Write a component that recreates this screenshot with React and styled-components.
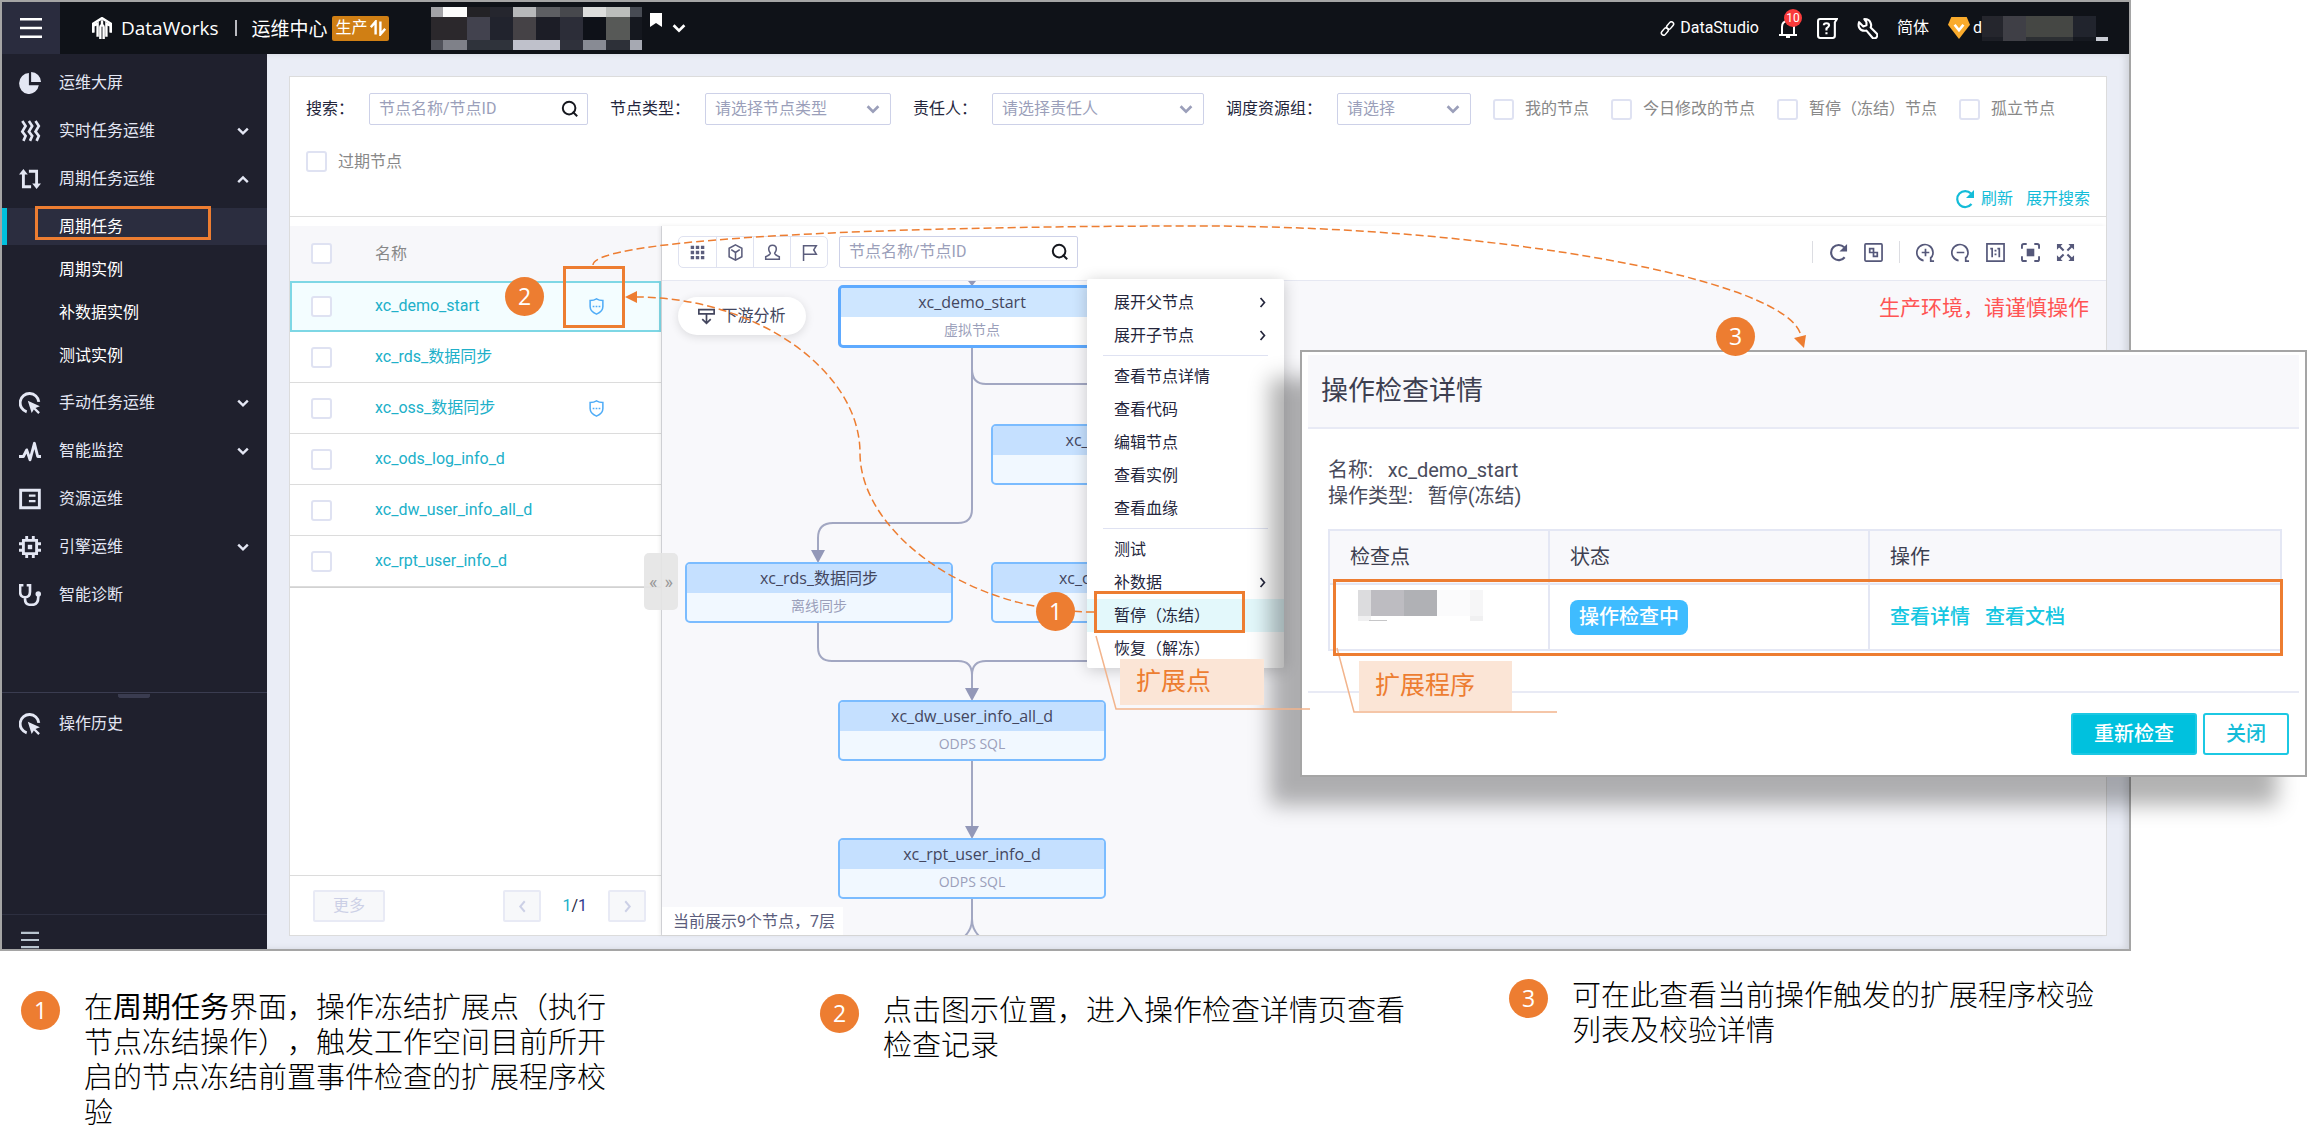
import React, { Component } from 'react'
import styled, { createGlobalStyle, css } from 'styled-components'

const cjk = '"Noto Sans CJK SC", sans-serif'
const orange = '#ed7d31'

const GlobalStyle = createGlobalStyle`
  *, *::before, *::after {
    box-sizing: border-box;
  }
  body {
    margin: 0;
    background: #fff;
    font-family: Roboto, ${cjk};
    font-size: 16px;
    line-height: 20px;
    color: #24263c;
    text-spacing-trim: space-all;
  }
  button, input, select {
    font: inherit;
    color: inherit;
  }
  svg {
    display: block;
    flex: none;
  }
  a {
    text-decoration: none;
  }
`

// icons, all drawn on a 20 x 20 grid

const icons = {
  pie: <g fill="currentColor"><path d="M9 1a9 9.500 0 1 0 9 11H9z" /><path d="M11 0a9 9 0 0 1 9 9h-9z" /></g>,
  waves: <path d="M3 1l3 4.500-3 5 3 4-2 4.500M9 1l3 4.500-3 5 3 4-2 4.500M15 1l3 4.500-3 5 3 4-2 4.500" fill="none" stroke="currentColor" strokeWidth="2.400" />,
  cycle: <g><path d="M4 5v12h7M9 3h7v12" fill="none" stroke="currentColor" strokeWidth="2.600" /><path d="M0 6l4-5 4 5zM12 14l4 5 4-5z" fill="currentColor" /></g>,
  manual: <g><path d="M7 18A8.500 8.500 0 1 1 18 9" fill="none" stroke="currentColor" strokeWidth="2.600" /><path d="M8 8l11 5-4 1.500 4 4-1.500 1.500-4-4-2 3z" fill="currentColor" /></g>,
  pulse: <path d="M0 15h4l3-6 3 9 4-15 3 12h3" fill="none" stroke="currentColor" strokeWidth="2.600" strokeLinejoin="round" />,
  resource: <g><path d="M1.500 2h17v16h-17z" fill="none" stroke="currentColor" strokeWidth="2.600" /><path d="M9 6h6v2H9zM9 11h6v2H9z" fill="currentColor" /></g>,
  chip: <g><path d="M4 4h12v12H4zM7 0v4M13 0v4M7 16v4M13 16v4M0 7h4M0 13h4M16 7h4M16 13h4" fill="none" stroke="currentColor" strokeWidth="2.600" /><path d="M8 8h4v4H8z" fill="currentColor" /></g>,
  doctor: <g><path d="M4 1H1v6q0 5 4.500 5T10 7V1H7M5.500 12v2q0 5 6 5t6-7V9" fill="none" stroke="currentColor" strokeWidth="2.400" /><circle cx="17.500" cy="9" r="2.500" fill="currentColor" /></g>,
  menu: <path d="M0 2h20M0 10h20M0 18h20" stroke="currentColor" strokeWidth="2.400" fill="none" />,
  down: <path d="M4 7l6 6 6-6" fill="none" stroke="currentColor" strokeWidth="3" />,
  up: <path d="M4 14l6-6 6 6" fill="none" stroke="currentColor" strokeWidth="3" />,
  right: <path d="M7 3l6 7-6 7" fill="none" stroke="currentColor" strokeWidth="2.600" />,
  left: <path d="M13 3l-6 7 6 7" fill="none" stroke="currentColor" strokeWidth="2.600" />,
  search: <g fill="none" stroke="currentColor" strokeWidth="2.200"><circle cx="9" cy="9" r="7" /><path d="M13 13l5 5" /></g>,
  logo: <g fill="none" stroke="currentColor" strokeWidth="2.200"><path d="M2 14V6l8-5 8 5v8" /><path d="M2 14V8l4-2v12M18 14V8l-4-2v12M10 3v4M8.500 20V9q0-1 1.500-2 1.500 1 1.500 2v11" /></g>,
  link: <g fill="none" stroke="currentColor" strokeWidth="2"><rect x="8" y="3" width="11" height="6" rx="3" transform="rotate(-50 13.500 6)" /><rect x="1" y="11" width="11" height="6" rx="3" transform="rotate(-50 6.500 14)" /></g>,
  bell: <g fill="none" stroke="currentColor" strokeWidth="2"><path d="M1 17h18M4 17V9q0-6 6-6t6 6v8" /><path d="M8 19h4" /></g>,
  help: <g fill="none" stroke="currentColor" strokeWidth="2"><path d="M19 1H3Q1 1 1 3v14q0 2 2 2h12q2 0 2-2V4z" /><path d="M6.500 7q0-2 2.500-2t2.500 2q0 1.500-2.500 3v2M9 13.500v2" /></g>,
  wrench: <path d="M7 1q5 0 6 4 1 2 0 4l6 6q1 2-.5 3.500T15 19l-6-7q-5 1-7-3-1-2 0-5l4 4 3-1V4z" fill="none" stroke="currentColor" strokeWidth="2" strokeLinejoin="round" />,
  gem: <g><path d="M3 0h14l3 7-10 13L0 7z" fill="#faab2c" /><path d="M6 7l4 5 4-5" fill="none" stroke="#fff" strokeWidth="2.400" /></g>,
  refresh: <g><path d="M16.500 15A8 8 0 1 1 16 4.500" fill="none" stroke="currentColor" strokeWidth="2.200" /><path d="M19 1v8h-8z" fill="currentColor" /></g>,
  shield: <g><path d="M10 1q3 2 7.500 2v7q0 6-7.500 9-7.500-3-7.500-9V3Q7 3 10 1z" fill="none" stroke="currentColor" strokeWidth="1.800" /><path d="M5.500 9h2v2h-2zM9 9h2v2H9zM12.500 9h2v2h-2z" fill="currentColor" /></g>,
  grid: <path d="M2 2h4v4H2zM8 2h4v4H8zM14 2h4v4h-4zM2 8h4v4H2zM8 8h4v4H8zM14 8h4v4h-4zM2 14h4v4H2zM8 14h4v4H8zM14 14h4v4h-4z" fill="currentColor" />,
  cube: <path d="M10 1l7.500 4v10L10 19l-7.500-4V5zM5 6.500l5 3.500 5-3.500M10 10v8" fill="none" stroke="currentColor" strokeWidth="1.800" />,
  person: <path d="M10 1.500q4.500 0 4.500 4.500 0 2.500-2 5 0 1.500 5.500 4v3H2v-3q5.500-2.500 5.500-4-2-2.500-2-5Q5.500 1.500 10 1.500z" fill="none" stroke="currentColor" strokeWidth="1.800" />,
  flag: <path d="M3 20V2h15l-3 5 3 5H3" fill="none" stroke="currentColor" strokeWidth="1.800" />,
  downstream: <path d="M1 2h18v5H1zM10 7v11M5 13l5 5 5-5" fill="none" stroke="currentColor" strokeWidth="2" />,
  relate: <g fill="none" stroke="currentColor" strokeWidth="1.800"><rect x="1" y="1" width="18" height="18" rx="1" /><path d="M6 6h4v4H6zM10 10h4v4h-4z" /></g>,
  zoomIn: <path d="M8 18.500A8.500 8.500 0 1 1 15 16.500M19 19h-3.500v-4.500M10 6v8M6 10h8" fill="none" stroke="currentColor" strokeWidth="1.800" />,
  zoomOut: <path d="M8 18.500A8.500 8.500 0 1 1 15 16.500M19 19h-3.500v-4.500M6 10h8" fill="none" stroke="currentColor" strokeWidth="1.800" />,
  actual: <g><path d="M1 1h18v18H1zM6.500 5v10M14 5v10M4.500 6h2M12 6h2" fill="none" stroke="currentColor" strokeWidth="1.800" /><path d="M9 7h2v2H9zM9 11h2v2H9z" fill="currentColor" /></g>,
  fit: <g><path d="M1 6V3q0-2 2-2h3M14 1h3q2 0 2 2v3M19 14v3q0 2-2 2h-3M6 19H3q-2 0-2-2v-3" fill="none" stroke="currentColor" strokeWidth="2" /><path d="M6 6h8v8H6z" fill="currentColor" /></g>,
  full: <g><path d="M3 3l5 5M17 3l-5 5M3 17l5-5M17 17l-5-5" stroke="currentColor" strokeWidth="2.200" /><path d="M1 1h6L1 7zM19 1v6l-6-6zM1 19v-6l6 6zM19 19h-6l6-6z" fill="currentColor" /></g>,
  updown: <path d="M1 9l6-7v16M19 11l-6 7V2" fill="none" stroke="currentColor" strokeWidth="3" />
}

const Icon = ({ name, size = 20 }) => (
  <svg width={size} height={size} viewBox="0 0 20 20" aria-hidden="true">{icons[name]}</svg>
)

const menuItems = [
  { icon: 'pie', label: '运维大屏' },
  { icon: 'waves', label: '实时任务运维', arrow: 'down' },
  { icon: 'cycle', label: '周期任务运维', arrow: 'up', children: ['周期任务', '周期实例', '补数据实例', '测试实例'] },
  { icon: 'manual', label: '手动任务运维', arrow: 'down' },
  { icon: 'pulse', label: '智能监控', arrow: 'down' },
  { icon: 'resource', label: '资源运维' },
  { icon: 'chip', label: '引擎运维', arrow: 'down' },
  { icon: 'doctor', label: '智能诊断' }
]

const tasks = [
  { name: 'xc_demo_start', checked: true },
  { name: 'xc_rds_数据同步' },
  { name: 'xc_oss_数据同步', checked: true },
  { name: 'xc_ods_log_info_d' },
  { name: 'xc_dw_user_info_all_d' },
  { name: 'xc_rpt_user_info_d' }
]

const nodes = [
  { name: 'xc_demo_start', type: '虚拟节点', x: 176, y: 4, current: true },
  { name: 'xc_oss_数据同步', type: '离线同步', x: 329, y: 143 },
  { name: 'xc_rds_数据同步', type: '离线同步', x: 23, y: 281 },
  { name: 'xc_ods_log_info_d', type: 'ODPS SQL', x: 329, y: 281 },
  { name: 'xc_dw_user_info_all_d', type: 'ODPS SQL', x: 176, y: 419 },
  { name: 'xc_rpt_user_info_d', type: 'ODPS SQL', x: 176, y: 557 }
]

const contextMenu = [
  [{ label: '展开父节点', more: true }, { label: '展开子节点', more: true }],
  [{ label: '查看节点详情' }, { label: '查看代码' }, { label: '编辑节点' }, { label: '查看实例' }, { label: '查看血缘' }],
  [{ label: '测试' }, { label: '补数据', more: true }, { label: '暂停（冻结）', active: true }, { label: '恢复（解冻）' }]
]

const Mosaic = ({ cells, width, height }) => (
  <svg width={width} height={height} viewBox={`0 0 ${width} ${height}`} aria-hidden="true">
    {cells.map(([x, y, w, h, fill], i) => <rect key={i} x={x} y={y} width={w} height={h} fill={fill} />)}
  </svg>
)

const workspaceCells = [
  [0, 0, 12, 10, '#a3a3a7'], [12, 0, 24, 10, '#fcfcfc'], [36, 0, 23, 10, '#232226'], [59, 0, 23, 10, '#25262e'],
  [82, 0, 23, 10, '#b7b8ba'], [105, 0, 24, 10, '#5e5f63'], [129, 0, 23, 10, '#47484d'], [152, 0, 23, 10, '#dcdddc'],
  [175, 0, 24, 10, '#bcbebc'], [199, 0, 12, 10, '#474b53'],
  [0, 10, 36, 23, '#2b282c'], [36, 10, 23, 23, '#42424e'], [59, 10, 23, 23, '#21232d'], [82, 10, 23, 23, '#454246'],
  [105, 10, 24, 23, '#1c1d26'], [129, 10, 23, 23, '#2c2d38'], [152, 10, 23, 23, '#0e1118'], [175, 10, 24, 23, '#575957'],
  [199, 10, 12, 23, '#15181f'],
  [0, 33, 12, 10, '#50525a'], [12, 33, 24, 10, '#7f8189'], [36, 33, 46, 10, '#2f333b'], [82, 33, 47, 10, '#bfc1cb'],
  [129, 33, 23, 10, '#2f313b'], [152, 33, 23, 10, '#888b94'], [175, 33, 24, 10, '#2d3038'], [199, 33, 12, 10, '#a6a9b2']
]

const userCells = [
  [0, 0, 21, 21, '#25262d'], [21, 0, 23, 25, '#3f3f46'], [44, 0, 47, 21, '#454744'], [91, 0, 23, 21, '#21242d'],
  [0, 21, 21, 4, '#1d1f26'], [44, 21, 47, 4, '#2c2f33'], [91, 21, 23, 4, '#161920'], [114, 21, 12, 4, '#c9ccd4']
]

const checkCells = [
  [0, 0, 13, 26, '#dcdcde'], [13, 0, 33, 26, '#bdbcc1'], [46, 0, 33, 26, '#b0b1b5'], [79, 0, 33, 26, '#fbfbfc'],
  [112, 0, 13, 26, '#f6f6f7'], [0, 26, 13, 5, '#f0f0f1'], [11, 30, 18, 1, '#c6c6c8'], [112, 26, 13, 5, '#f0f0f1']
]

class Sidebar extends Component {

  renderItem = (item) => (
    <React.Fragment key={item.label}>
      <MenuLink href="#">
        <Icon name={item.icon} size={22} />
        <MenuText>{item.label}</MenuText>
        {item.arrow && <Icon name={item.arrow} size={16} />}
      </MenuLink>
      {item.children &&
        <SubMenu>
          {item.children.map((label, i) => <SubLink href="#" key={label} $active={i === 0}>{label}</SubLink>)}
        </SubMenu>
      }
    </React.Fragment>
  )

  render() {
    return (
      <SidebarWrapper>
        <MenuList>{menuItems.map(this.renderItem)}</MenuList>
        <History>
          <MenuLink href="#">
            <Icon name="manual" size={22} />
            <MenuText>操作历史</MenuText>
          </MenuLink>
        </History>
        <Collapse aria-label="收起菜单"><Icon name="menu" size={18} /></Collapse>
      </SidebarWrapper>
    )
  }
}

const Header = () => (
  <HeaderBar>
    <MenuButton aria-label="菜单"><Icon name="menu" size={22} /></MenuButton>
    <Logo href="#"><Icon name="logo" size={22} />DataWorks</Logo>
    <HeaderDivider />
    <Center>运维中心</Center>
    <EnvBadge>生产<Icon name="updown" size={16} /></EnvBadge>
    <Workspace>
      <Mosaic cells={workspaceCells} width={211} height={43} />
      <svg width="12" height="14" viewBox="0 0 12 14"><path d="M0 0h12v14l-6-4-6 4z" fill="#fff" /></svg>
      <Icon name="down" size={18} />
    </Workspace>
    <HeaderRight>
      <HeaderLink href="#"><Icon name="link" size={15} />DataStudio</HeaderLink>
      <BellButton aria-label="消息"><Icon name="bell" size={20} /><BellCount>10</BellCount></BellButton>
      <IconButton aria-label="帮助"><Icon name="help" size={21} /></IconButton>
      <IconButton aria-label="设置"><Icon name="wrench" size={21} /></IconButton>
      <HeaderLink href="#">简体</HeaderLink>
      <User><Icon name="gem" size={22} />d<Mosaic cells={userCells} width={126} height={25} /></User>
    </HeaderRight>
  </HeaderBar>
)

const SelectField = ({ label, placeholder, width }) => (
  <Field>
    {label}
    <SelectBox $width={width}>
      <select><option>{placeholder}</option></select>
      <Icon name="down" size={18} />
    </SelectBox>
  </Field>
)

const CheckField = ({ label }) => (
  <CheckLabel><CheckBox type="checkbox" />{label}</CheckLabel>
)

const Filters = () => (
  <FilterArea>
    <FilterRow>
      <Field>
        搜索：
        <SearchBox $width={219}>
          <input placeholder="节点名称/节点ID" />
          <Icon name="search" size={18} />
        </SearchBox>
      </Field>
      <SelectField label="节点类型：" placeholder="请选择节点类型" width={186} />
      <SelectField label="责任人：" placeholder="请选择责任人" width={212} />
      <SelectField label="调度资源组：" placeholder="请选择" width={134} />
      {['我的节点', '今日修改的节点', '暂停（冻结）节点', '孤立节点', '过期节点'].map(label => <CheckField key={label} label={label} />)}
    </FilterRow>
    <FilterLinks>
      <a href="#"><Icon name="refresh" size={20} />刷新</a>
      <a href="#">展开搜索</a>
    </FilterLinks>
  </FilterArea>
)

const TaskList = () => (
  <ListPane>
    <TaskTable>
      <thead>
        <tr>
          <th><CheckBox type="checkbox" aria-label="全选" /></th>
          <th>名称</th>
          <th />
        </tr>
      </thead>
      <tbody>
        {tasks.map((task, i) => (
          <TaskRow key={task.name} $selected={i === 0}>
            <td><CheckBox type="checkbox" aria-label={task.name} /></td>
            <td><a href="#">{task.name}</a></td>
            <td>{task.checked && <Icon name="shield" size={17} />}</td>
          </TaskRow>
        ))}
      </tbody>
    </TaskTable>
    <ListFooter>
      <PageButton $width={72} disabled>更多</PageButton>
      <Pager>
        <PageButton $width={38} disabled aria-label="上一页"><Icon name="left" size={15} /></PageButton>
        <span><b>1</b>/<i>1</i></span>
        <PageButton $width={38} disabled aria-label="下一页"><Icon name="right" size={15} /></PageButton>
      </Pager>
    </ListFooter>
    <Splitter aria-label="调整宽度"><span>«</span><span>»</span></Splitter>
  </ListPane>
)

const Edges = () => (
  <EdgeLayer aria-hidden="true">
    <g fill="none" stroke="#a2a7c2" strokeWidth="2">
      <path d="M310 66V228Q310 242 296 242H171Q156 242 156 257V272" />
      <path d="M310 88Q310 103 324 103H449Q463 103 463 117V134" />
      <path d="M156 341V366Q156 380 170 380H296Q310 380 310 394V410" />
      <path d="M463 341V366Q463 380 449 380H324Q310 380 310 394" />
      <path d="M310 480V548" />
      <path d="M310 618V638Q310 648 303 655M310 638Q310 648 317 655" />
    </g>
    <g fill="#9398b8">
      <path d="M306 0h8l-4 5z" />
      <path d="M149 269h14l-7 13z" />
      <path d="M303 407h14l-7 13z" />
      <path d="M303 545h14l-7 13z" />
    </g>
  </EdgeLayer>
)

class Graph extends Component {

  renderMenuItem = (item) => (
    <ContextItem key={item.label} $active={item.active}>
      {item.label}
      {item.more && <Icon name="right" size={13} />}
    </ContextItem>
  )

  render() {
    return (
      <GraphPane>
        <Toolbar>
          <ButtonGroup>
            {['grid', 'cube', 'person', 'flag'].map(name => <button key={name} aria-label={name}><Icon name={name} size={17} /></button>)}
          </ButtonGroup>
          <SearchBox $width={239}>
            <input placeholder="节点名称/节点ID" aria-label="节点名称/节点ID" />
            <Icon name="search" size={18} />
          </SearchBox>
          <Tools>
            <ToolDivider />
            <IconButton aria-label="刷新"><Icon name="refresh" size={19} /></IconButton>
            <IconButton aria-label="关联"><Icon name="relate" size={19} /></IconButton>
            <ToolDivider />
            <IconButton aria-label="放大"><Icon name="zoomIn" size={19} /></IconButton>
            <IconButton aria-label="缩小"><Icon name="zoomOut" size={19} /></IconButton>
            <IconButton aria-label="实际大小"><Icon name="actual" size={19} /></IconButton>
            <IconButton aria-label="适应画布"><Icon name="fit" size={19} /></IconButton>
            <IconButton aria-label="全屏"><Icon name="full" size={19} /></IconButton>
          </Tools>
        </Toolbar>
        <Canvas>
          <Edges />
          {nodes.map(node => (
            <Node key={node.name} $x={node.x} $y={node.y} $current={node.current}>
              <NodeName $current={node.current}>{node.name}</NodeName>
              <NodeType>{node.type}</NodeType>
            </Node>
          ))}
          <Downstream><Icon name="downstream" size={17} />下游分析</Downstream>
          <Warning>生产环境，请谨慎操作</Warning>
          <NodeCount>当前展示9个节点，7层</NodeCount>
        </Canvas>
        <ContextMenu>
          {contextMenu.map((group, i) => <ContextGroup key={i}>{group.map(this.renderMenuItem)}</ContextGroup>)}
        </ContextMenu>
      </GraphPane>
    )
  }
}

const CheckDialog = () => (
  <Dialog role="dialog" aria-labelledby="check-title">
    <DialogTitle id="check-title">操作检查详情</DialogTitle>
    <DialogBody>
      <div>名称:&nbsp;&nbsp; xc_demo_start</div>
      <div>操作类型:&nbsp;&nbsp; 暂停(冻结)</div>
      <CheckTable>
        <thead>
          <tr><th>检查点</th><th>状态</th><th>操作</th></tr>
        </thead>
        <tbody>
          <tr>
            <td><Mosaic cells={checkCells} width={125} height={54} /></td>
            <td><StatusTag>操作检查中</StatusTag></td>
            <td><a href="#">查看详情</a><a href="#">查看文档</a></td>
          </tr>
        </tbody>
      </CheckTable>
    </DialogBody>
    <DialogFooter>
      <DialogButton $primary>重新检查</DialogButton>
      <DialogButton>关闭</DialogButton>
    </DialogFooter>
  </Dialog>
)

const Annotations = () => (
  <AnnotationLayer>
    <svg width="100%" height="100%" fill="none" stroke={orange} strokeWidth="1.500">
      <g strokeDasharray="8 4">
        <path d="M593 265C593 240 865 226 1199 226C1500 226 1790 280 1801 336" />
        <path d="M1094 612C965 612 860 530 860 453C860 370 755 297 636 297" />
      </g>
      <path d="M625 297l12-6v12zM1804 348l-10-10 12-3z" fill={orange} stroke="none" />
      <g stroke="#f2b48c">
        <path d="M1096 636l20 73h194" />
        <path d="M1337 648l17 64h203" />
      </g>
    </svg>
    <Highlight $x={35} $y={206} $w={176} $h={34} />
    <Highlight $x={563} $y={266} $w={62} $h={62} />
    <Highlight $x={1094} $y={591} $w={151} $h={42} />
    <Highlight $x={1333} $y={579} $w={950} $h={77} />
    <Pin $x={1036} $y={592}>1</Pin>
    <Pin $x={505} $y={277}>2</Pin>
    <Pin $x={1716} $y={317}>3</Pin>
    <Tip $x={1120} $y={659} $w={144} $h={46}>扩展点</Tip>
    <Tip $x={1359} $y={661} $w={153} $h={50}>扩展程序</Tip>
  </AnnotationLayer>
)

export default class App extends Component {
  render() {
    return (
      <Page>
        <GlobalStyle />
        <Window>
          <Header />
          <Content>
            <Sidebar />
            <Main>
              <Panel>
                <Filters />
                <Work>
                  <TaskList />
                  <Graph />
                </Work>
              </Panel>
            </Main>
          </Content>
        </Window>
        <CheckDialog />
        <Annotations />
        <Captions>
          <Caption $top={34}>
            <Step>1</Step>
            <p>在<b>周期任务</b>界面，操作冻结扩展点（执行节点冻结操作），触发工作空间目前所开启的节点冻结前置事件检查的扩展程序校验</p>
          </Caption>
          <Caption $top={37}>
            <Step>2</Step>
            <p>点击图示位置，进入操作检查详情页查看检查记录</p>
          </Caption>
          <Caption $top={22}>
            <Step>3</Step>
            <p>可在此查看当前操作触发的扩展程序校验列表及校验详情</p>
          </Caption>
        </Captions>
      </Page>
    )
  }
}

const Page = styled.div`
  position: relative;
`

const Window = styled.div`
  margin-right: 178px;
  border: 2px solid #a5a5a5;
`

const HeaderBar = styled.header`
  display: flex;
  align-items: center;
  height: 52px;
  padding-right: 21px;
  overflow: hidden;
  background: #0f1218;
  color: #fff;
`

const bareButton = css`
  display: flex;
  align-items: center;
  justify-content: center;
  padding: 0;
  border: 0;
  background: none;
`

const MenuButton = styled.button`
  ${bareButton}
  width: 58px;
  height: 52px;
  background: #2a2c3e;
`

const Logo = styled.a`
  display: flex;
  align-items: center;
  gap: 8px;
  margin-left: 31px;
  color: #fff;
  font-family: "Open Sans", sans-serif;
  font-size: 19px;
`

const HeaderDivider = styled.span`
  width: 2px;
  height: 16px;
  margin: 0 14px 0 17px;
  background: #b9bac0;
`

const Center = styled.span`
  font-family: ${cjk};
  font-size: 19px;
`

const EnvBadge = styled.span`
  display: flex;
  align-items: center;
  gap: 3px;
  height: 25px;
  margin-left: 5px;
  padding: 0 3px;
  border-radius: 2px;
  background: #d07f14;
`

const Workspace = styled.div`
  display: flex;
  align-items: center;
  margin-left: 42px;
  gap: 8px;
  svg:nth-child(2) {
    margin-bottom: 16px;
  }
`

const HeaderRight = styled.div`
  display: flex;
  align-items: center;
  gap: 19px;
  margin-left: auto;
`

const HeaderLink = styled.a`
  display: flex;
  align-items: center;
  gap: 5px;
  color: #fff;
`

const IconButton = styled.button`
  ${bareButton}
`

const BellButton = styled(IconButton)`
  position: relative;
`

const BellCount = styled.span`
  position: absolute;
  top: -9px;
  left: 6px;
  width: 18px;
  height: 18px;
  border-radius: 9px;
  background: #f93b3b;
  font-size: 12px;
  line-height: 18px;
`

const User = styled.span`
  display: flex;
  align-items: center;
  svg:first-child {
    margin-right: 3px;
  }
`

const Content = styled.div`
  display: flex;
`

const SidebarWrapper = styled.nav`
  display: flex;
  flex-direction: column;
  flex: none;
  width: 265px;
  background: #1f202d;
  color: #e4e7f4;
`

const MenuList = styled.div`
  flex: 1;
  padding-top: 5px;
`

const MenuLink = styled.a`
  display: flex;
  align-items: center;
  height: 48px;
  padding: 0 16px 0 17px;
  gap: 18px;
  color: inherit;
`

const MenuText = styled.span`
  flex: 1;
`

const SubMenu = styled.div`
  display: flex;
  flex-direction: column;
  gap: 6px;
  padding: 5px 0;
`

const SubLink = styled.a`
  display: flex;
  align-items: center;
  height: 37px;
  padding-left: ${props => props.$active ? '52px' : '57px'};
  border-left: ${props => props.$active ? '5px solid #00c1de' : '0'};
  background: ${props => props.$active ? '#2b2d3f' : 'transparent'};
  color: #fff;
`

const History = styled.div`
  position: relative;
  height: 222px;
  padding-top: 7px;
  border-top: 1px solid #3a3c50;
  ::before {
    content: '';
    position: absolute;
    top: 1px;
    left: 116px;
    width: 32px;
    height: 4px;
    border-radius: 0 0 3px 3px;
    background: #3a3c50;
  }
`

const Collapse = styled.button`
  ${bareButton}
  justify-content: flex-start;
  align-items: flex-start;
  height: 35px;
  padding: 16px 19px 0;
  border-top: 1px solid #2d2f40;
  color: #b8c4cf;
`

const Main = styled.main`
  flex: 1;
  min-width: 0;
  padding: 22px 22px 13px;
  background: #eaedf6;
  box-shadow: inset -4px 0 6px rgba(0, 0, 0, 0.1);
`

const Panel = styled.div`
  border: 1px solid #dcdcdc;
  background: #fff;
`

const FilterArea = styled.form`
  padding: 16px 16px 7px;
  border-bottom: 1px solid #dcdcdc;
`

const FilterRow = styled.div`
  display: flex;
  flex-wrap: wrap;
  align-items: center;
  gap: 26px 22px;
`

const Field = styled.label`
  display: flex;
  align-items: center;
  gap: 15px;
  white-space: nowrap;
`

const inputBox = css`
  display: flex;
  align-items: center;
  width: ${props => props.$width}px;
  height: 32px;
  border: 1px solid #cdd1e8;
  border-radius: 2px;
  background: #fff;
`

const SearchBox = styled.span`
  ${inputBox}
  padding: 0 8px 0 9px;
  color: #16181f;
  input {
    flex: 1;
    min-width: 0;
    padding: 0;
    border: 0;
    outline: 0;
  }
  input::placeholder {
    color: #9b9fba;
  }
`

const SelectBox = styled.span`
  ${inputBox}
  position: relative;
  color: #9b9fba;
  select {
    width: 100%;
    height: 30px;
    padding: 0 9px;
    border: 0;
    background: none;
    appearance: none;
  }
  svg {
    position: absolute;
    right: 8px;
    pointer-events: none;
  }
`

const CheckLabel = styled.label`
  display: flex;
  align-items: center;
  gap: 11px;
  color: #888;
`

const CheckBox = styled.input`
  flex: none;
  appearance: none;
  width: 21px;
  height: 21px;
  margin: 0;
  border: 2px solid #dfe2f2;
  border-radius: 3px;
  background: #fff;
`

const FilterLinks = styled.div`
  display: flex;
  justify-content: flex-end;
  gap: 13px;
  margin-top: 17px;
  a {
    display: flex;
    align-items: center;
    gap: 6px;
    color: #14bcd8;
  }
`

const Work = styled.div`
  display: grid;
  grid-template-columns: 372px 1fr;
  padding-top: 9px;
`

const ListPane = styled.section`
  position: relative;
  display: flex;
  flex-direction: column;
  justify-content: space-between;
  border-right: 1px solid #dcdde2;
`

const TaskTable = styled.table`
  width: 100%;
  table-layout: fixed;
  border-spacing: 0;
  border-bottom: 1px solid #d2d2d2;
  th {
    height: 55px;
    padding: 0;
    background: #f7f7fa;
    color: #888;
    font-weight: 400;
    text-align: left;
  }
  th:first-child {
    width: 85px;
  }
  th:last-child {
    width: 129px;
  }
  td {
    height: 51px;
    padding: 0;
  }
  th:first-child, td:first-child {
    padding-left: 21px;
  }
  ${CheckBox} {
    display: block;
  }
`

const TaskRow = styled.tr`
  background: ${props => props.$selected ? '#f3fdff' : '#fff'};
  outline: ${props => props.$selected ? '2px solid #7ed7e5' : 'none'};
  outline-offset: -2px;
  td {
    border-bottom: 1px solid #dcdcdc;
  }
  a {
    color: #20b0c9;
  }
  svg {
    margin: 0 auto;
    color: #4facf7;
  }
`

const ListFooter = styled.div`
  display: flex;
  justify-content: space-between;
  padding: 14px 15px 13px 23px;
  border-top: 1px solid #dcdcdc;
`

const Pager = styled.div`
  display: flex;
  align-items: center;
  gap: 21px;
  b {
    color: #20b0c9;
    font-weight: 400;
  }
  i {
    color: #2e3a8c;
    font-style: normal;
  }
`

const PageButton = styled.button`
  ${bareButton}
  width: ${props => props.$width}px;
  height: 32px;
  border: 2px solid #e8eaf5;
  border-radius: 2px;
  background: #f7f8fa;
  color: #ccd0e6;
`

const Splitter = styled.button`
  ${bareButton}
  position: absolute;
  z-index: 2;
  top: 327px;
  right: -17px;
  width: 34px;
  height: 57px;
  gap: 7px;
  border-radius: 5px;
  background: rgba(228, 228, 228, 0.9);
  color: #999;
  font-size: 18px;
`

const GraphPane = styled.section`
  position: relative;
  display: flex;
  flex-direction: column;
  min-width: 0;
  box-shadow: -2px 0 4px rgba(0, 0, 0, 0.08);
`

const Toolbar = styled.div`
  display: flex;
  align-items: center;
  gap: 11px;
  height: 55px;
  padding: 0 31px 2px 16px;
  border-bottom: 1px solid #e6e8f2;
`

const ButtonGroup = styled.div`
  display: flex;
  height: 32px;
  border: 1px solid #dfe2f0;
  border-radius: 5px;
  color: #5b5d7c;
  button {
    ${bareButton}
    width: 37px;
  }
  button + button {
    border-left: 1px solid #dfe2f0;
  }
`

const Tools = styled.div`
  display: flex;
  align-items: center;
  gap: 16px;
  margin-left: auto;
  color: #55587a;
`

const ToolDivider = styled.span`
  width: 1px;
  height: 22px;
  background: #dcdde2;
`

const Canvas = styled.div`
  position: relative;
  flex: 1;
  min-height: 654px;
  overflow: hidden;
  background: #f8f8fb;
`

const EdgeLayer = styled.svg`
  position: absolute;
  width: 100%;
  height: 100%;
`

const Node = styled.div`
  position: absolute;
  left: ${props => props.$x}px;
  top: ${props => props.$y}px;
  width: 268px;
  height: ${props => props.$current ? 63 : 61}px;
  overflow: hidden;
  border: ${props => props.$current ? '3px solid #5eaaff' : '2px solid #7bbcff'};
  border-radius: 5px;
  background: ${props => props.$current ? '#fff' : '#f1f8ff'};
  text-align: center;
`

const NodeName = styled.div`
  height: 29px;
  background: ${props => props.$current ? '#cee6ff' : '#c5e0ff'};
  color: #43465e;
  font-family: "Open Sans", ${cjk};
  line-height: 28px;
`

const NodeType = styled.div`
  color: #9b9fba;
  font-family: "Open Sans", ${cjk};
  font-size: 14px;
  line-height: 26px;
`

const Downstream = styled.button`
  ${bareButton}
  position: absolute;
  top: 16px;
  left: 16px;
  width: 128px;
  height: 38px;
  gap: 6px;
  border-radius: 19px;
  background: #fff;
  box-shadow: 0 2px 10px rgba(0, 0, 0, 0.12);
  color: #43465e;
`

const Warning = styled.div`
  position: absolute;
  top: 13px;
  right: 17px;
  color: #ff5454;
  font-size: 21px;
  line-height: 28px;
`

const NodeCount = styled.div`
  position: absolute;
  bottom: 0;
  left: 0;
  padding: 5px 8px 3px 11px;
  background: #fff;
  color: #5b5d7c;
`

const ContextMenu = styled.div`
  position: absolute;
  z-index: 3;
  top: 53px;
  left: 425px;
  width: 197px;
  padding: 7px 0 3px;
  border-radius: 2px;
  background: #fff;
  box-shadow: 0 2px 16px rgba(0, 0, 0, 0.2);
`

const ContextGroup = styled.div`
  & + &::before {
    content: '';
    display: block;
    height: 1px;
    margin: 3px 16px 4px;
    background: #dfe2f2;
  }
`

const ContextItem = styled.button`
  ${bareButton}
  justify-content: space-between;
  width: 100%;
  height: 33px;
  padding: 0 15px 0 27px;
  background: ${props => props.$active ? '#e3f8fb' : 'none'};
`

const Dialog = styled.div`
  position: absolute;
  z-index: 4;
  top: 350px;
  right: 2px;
  width: 1007px;
  padding: 3px 6px 20px;
  border: 2px solid #a5a5a5;
  background: #fff;
  box-shadow: -30px 28px 20px rgba(0, 0, 0, 0.3);
  font-size: 20px;
`

const DialogTitle = styled.h2`
  margin: 0;
  padding-left: 13px;
  border-bottom: 2px solid #e8eaf5;
  background: #f8f8fb;
  color: #3d3f50;
  font-size: 27px;
  font-weight: 400;
  line-height: 72px;
`

const DialogBody = styled.div`
  padding: 28px 17px 40px 20px;
  border-bottom: 2px solid #e8eaf5;
  color: #4a4c5c;
  line-height: 26px;
`

const CheckTable = styled.table`
  width: 100%;
  margin-top: 20px;
  table-layout: fixed;
  border-collapse: collapse;
  th, td {
    padding: 0 20px;
    border: 2px solid #e4e7f4;
    font-weight: 400;
    text-align: left;
  }
  th {
    height: 54px;
    background: #f8f8fb;
    color: #3d3f50;
  }
  th:first-child {
    width: 220px;
  }
  th:nth-child(2) {
    width: 320px;
  }
  td {
    height: 66px;
  }
  td:first-child {
    padding-left: 28px;
  }
  a {
    margin-right: 15px;
    color: #14c6e1;
    font-weight: 500;
  }
`

const StatusTag = styled.span`
  display: inline-block;
  padding: 4px 9px 5px;
  border-radius: 8px;
  background: #3fbcff;
  color: #fff;
  font-weight: 500;
`

const DialogFooter = styled.div`
  display: flex;
  justify-content: flex-end;
  gap: 6px;
  padding: 20px 10px 0;
`

const DialogButton = styled.button`
  height: 42px;
  padding: 0 21px;
  border: 2px solid #1cc8e3;
  border-radius: 3px;
  background: ${props => props.$primary ? '#00c1de' : '#fff'};
  color: ${props => props.$primary ? '#fff' : '#14bcd8'};
  font-weight: 500;
`

const AnnotationLayer = styled.div`
  position: absolute;
  z-index: 5;
  inset: 0;
  pointer-events: none;
`

const Highlight = styled.div`
  position: absolute;
  left: ${props => props.$x}px;
  top: ${props => props.$y}px;
  width: ${props => props.$w}px;
  height: ${props => props.$h}px;
  border: 3px solid ${orange};
`

const Step = styled.span`
  flex: none;
  width: 39px;
  height: 39px;
  border-radius: 50%;
  background: ${orange};
  color: #fff;
  font-family: "Open Sans", sans-serif;
  font-size: 23px;
  line-height: 38px;
  text-align: center;
`

const Pin = styled(Step)`
  position: absolute;
  left: ${props => props.$x}px;
  top: ${props => props.$y}px;
`

const Tip = styled(Highlight)`
  padding-left: 16px;
  border: 0;
  background: #fbe5d6;
  color: ${orange};
  font-size: 25px;
  line-height: ${props => props.$h}px;
`

const Captions = styled.div`
  display: grid;
  grid-template-columns: 799px 689px 1fr;
  padding-left: 21px;
`

const Caption = styled.div`
  display: flex;
  align-items: flex-start;
  gap: 24px;
  padding-top: ${props => props.$top}px;
  color: #000;
  p {
    width: 524px;
    margin: 3px 0 0;
    font-family: ${cjk};
    font-size: 29px;
    font-weight: 300;
    line-height: 35px;
  }
  ${Step} {
    margin-top: 6px;
  }
`
